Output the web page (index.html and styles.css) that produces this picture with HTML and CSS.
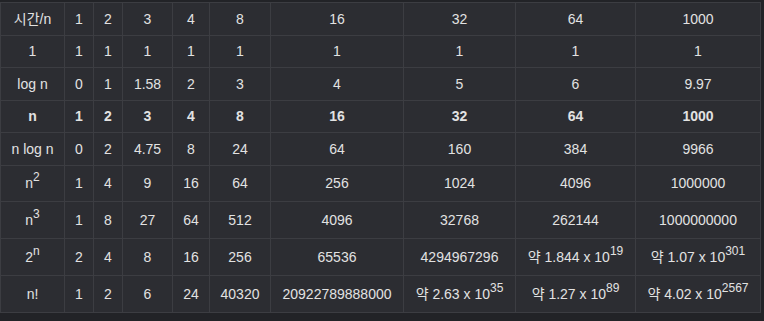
FILE: index.html
```html
<!DOCTYPE html>
<html lang="ko">
<head>
<meta charset="utf-8">
<link rel="stylesheet" href="styles.css">
</head>
<body>
<table class="grid">
  <colgroup>
    <col class="c1"><col class="c2"><col class="c3"><col class="c4"><col class="c5">
    <col class="c6"><col class="c7"><col class="c8"><col class="c9"><col class="c10">
  </colgroup>
  <tbody>
    <tr><td>시간/n</td><td>1</td><td>2</td><td>3</td><td>4</td><td>8</td><td>16</td><td>32</td><td>64</td><td>1000</td></tr>
    <tr><td>1</td><td>1</td><td>1</td><td>1</td><td>1</td><td>1</td><td>1</td><td>1</td><td>1</td><td>1</td></tr>
    <tr><td>log n</td><td>0</td><td>1</td><td>1.58</td><td>2</td><td>3</td><td>4</td><td>5</td><td>6</td><td>9.97</td></tr>
    <tr class="bold"><td>n</td><td>1</td><td>2</td><td>3</td><td>4</td><td>8</td><td>16</td><td>32</td><td>64</td><td>1000</td></tr>
    <tr><td>n log n</td><td>0</td><td>2</td><td>4.75</td><td>8</td><td>24</td><td>64</td><td>160</td><td>384</td><td>9966</td></tr>
    <tr class="tall"><td>n<sup>2</sup></td><td>1</td><td>4</td><td>9</td><td>16</td><td>64</td><td>256</td><td>1024</td><td>4096</td><td>1000000</td></tr>
    <tr class="tall"><td>n<sup>3</sup></td><td>1</td><td>8</td><td>27</td><td>64</td><td>512</td><td>4096</td><td>32768</td><td>262144</td><td>1000000000</td></tr>
    <tr class="taller"><td>2<sup>n</sup></td><td>2</td><td>4</td><td>8</td><td>16</td><td>256</td><td>65536</td><td>4294967296</td><td>약 1.844 x 10<sup>19</sup></td><td>약 1.07 x 10<sup>301</sup></td></tr>
    <tr class="taller"><td>n!</td><td>1</td><td>2</td><td>6</td><td>24</td><td>40320</td><td>20922789888000</td><td>약 2.63 x 10<sup>35</sup></td><td>약 1.27 x 10<sup>89</sup></td><td>약 4.02 x 10<sup>2567</sup></td></tr>
  </tbody>
</table>
</body>
</html>
```
FILE: styles.css
```css
html, body {
  margin: 0;
  padding: 0;
  background: #222327;
}
body {
  padding-top: 2px;
  font-family: "Liberation Sans", "Noto Sans CJK KR", sans-serif;
  font-size: 14px;
  color: #e2e2e2;
}
.grid {
  border-collapse: collapse;
  table-layout: fixed;
  width: 761px;
  background: #2c2d32;
}
.grid td {
  border: 1px solid #3c3d42;
  padding: 0;
  height: 31.5px;
  text-align: center;
  vertical-align: middle;
  white-space: nowrap;
  line-height: 16px;
}
.grid tr.tall td { height: 35.5px; }
.grid tr.taller td { height: 36px; }
.grid tr.bold td { font-weight: bold; }
.grid sup {
  font-size: 12px;
  line-height: 0;
  vertical-align: 7px;
}
.c1 { width: 64px; }
.c2 { width: 29px; }
.c3 { width: 29px; }
.c4 { width: 50px; }
.c5 { width: 37px; }
.c6 { width: 61px; }
.c7 { width: 133px; }
.c8 { width: 112px; }
.c9 { width: 120px; }
.c10 { width: 125px; }
```
